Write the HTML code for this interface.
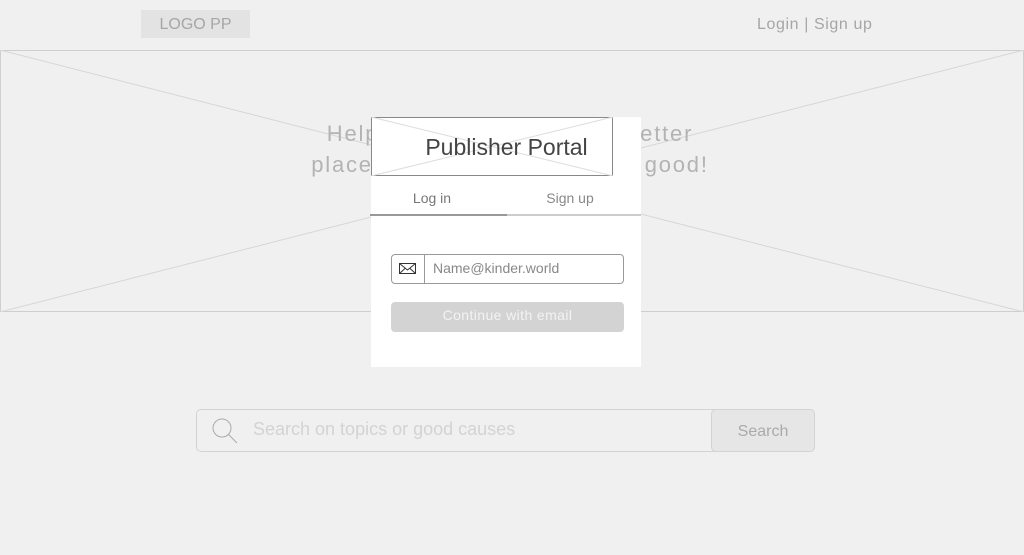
<!DOCTYPE html>
<html><head><style>
body{margin:0;width:1024px;height:555px;background:#f0f0f0;font-family:"Liberation Sans",sans-serif;position:relative;overflow:hidden}
.a{position:absolute}
</style></head><body>
<div class="a" style="left:141px;top:10px;width:109px;height:28px;background:#e3e3e3;color:#a6a6a6;font-size:16px;line-height:30px;text-align:center">LOGO PP</div>
<div class="a" style="left:757px;top:16px;color:#a6a6a6;font-size:16px;letter-spacing:0.6px">Login | Sign up</div>
<svg class="a" style="left:0;top:50px" width="1024" height="262"><rect x="0.5" y="0.5" width="1023" height="261" fill="none" stroke="#cfcfcf"/><line x1="0" y1="0" x2="1024" y2="262" stroke="#d6d6d6"/><line x1="1024" y1="0" x2="0" y2="262" stroke="#d6d6d6"/></svg>
<div class="a" style="left:200px;top:118px;width:620px;text-align:center;color:#b3b3b3;font-size:22px;line-height:31px;letter-spacing:1.8px">Help us make the world a better<br>place by searching for doing good!</div>
<div class="a" style="left:371px;top:117px;width:270px;height:250px;background:#fff"></div>
<svg class="a" style="left:371px;top:117px" width="271" height="59"><rect x="0.5" y="0.5" width="241" height="58" fill="none" stroke="#888"/><line x1="0" y1="0" x2="242" y2="59" stroke="#ddd"/><line x1="242" y1="0" x2="0" y2="59" stroke="#ddd"/></svg>
<div class="a" style="left:371px;top:134px;width:271px;text-align:center;font-size:23px;color:#444">Publisher Portal</div>
<div class="a" style="left:371px;top:190px;width:122px;text-align:center;font-size:14px;color:#777">Log in</div>
<div class="a" style="left:510px;top:190px;width:120px;text-align:center;font-size:14px;color:#888">Sign up</div>
<div class="a" style="left:370px;top:214px;width:137px;height:2px;background:#999"></div>
<div class="a" style="left:507px;top:214px;width:134px;height:2px;background:#ccc"></div>
<div class="a" style="left:391px;top:254px;width:231px;height:28px;border:1px solid #999;border-radius:4px;background:#fff"></div>
<div class="a" style="left:424px;top:254px;width:1px;height:30px;background:#999"></div>
<svg class="a" style="left:399px;top:263px" width="18" height="12"><rect x="0.5" y="0.5" width="16" height="10" fill="none" stroke="#333"/><path d="M0.5 0.5L8.5 7L16.5 0.5M0.5 10.5L6 5.5M16.5 10.5L11 5.5" fill="none" stroke="#333"/></svg>
<div class="a" style="left:433px;top:260px;font-size:14px;color:#888">Name@kinder.world</div>
<div class="a" style="left:391px;top:302px;width:233px;height:30px;background:#d3d3d3;border-radius:4px;color:#f3f3f3;font-size:14px;line-height:26px;text-align:center;letter-spacing:0.4px">Continue with email</div>
<div class="a" style="left:196px;top:409px;width:617px;height:41px;border:1px solid #d3d3d3;border-radius:5px"></div>
<div class="a" style="left:711px;top:409px;width:102px;height:41px;border:1px solid #d3d3d3;border-radius:5px;background:#e6e6e6;color:#aaa;font-size:16px;line-height:43px;text-align:center">Search</div>
<svg class="a" style="left:210px;top:416px" width="30" height="28"><circle cx="12" cy="12" r="9" fill="none" stroke="#aaa"/><line x1="18.5" y1="18.5" x2="27" y2="27" stroke="#aaa"/></svg>
<div class="a" style="left:253px;top:419px;font-size:18px;color:#d3d3d3">Search on topics or good causes</div>
</body></html>
